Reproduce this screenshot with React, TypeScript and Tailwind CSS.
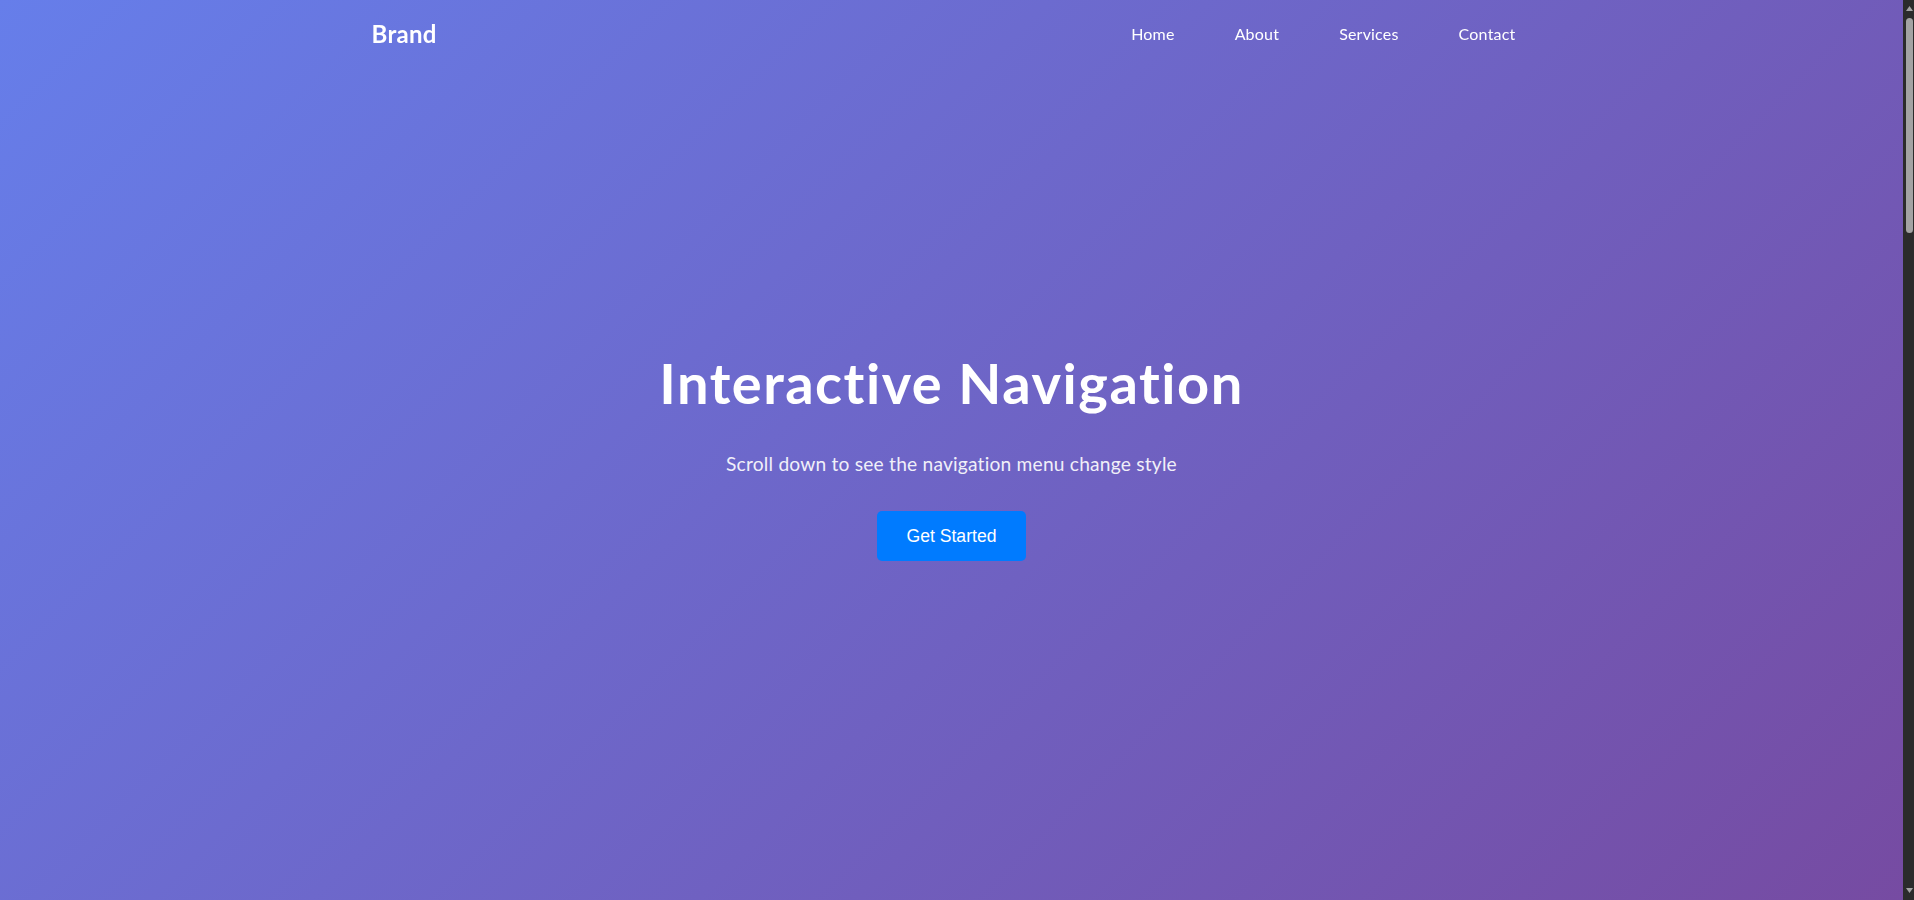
import React from 'react';

const LINKS = ['Home', 'About', 'Services', 'Contact'];

// Secções abaixo do hero (fora do ecrã inicial)
const SECTIONS = [
  { id: 'about', title: 'About', text: 'Learn more about who we are and what we do.' },
  { id: 'services', title: 'Services', text: 'Discover the services we offer to our clients.' },
  { id: 'contact', title: 'Contact', text: 'Get in touch with us for any questions.' },
];

// Barra de rolagem escura como na captura
const ScrollTrack: React.FC = () => (
  <aside className="w-[11px] shrink-0 h-screen bg-[#2b2b2b] flex flex-col items-end pr-[1px]">
    <svg width="7" height="5" viewBox="0 0 7 5" className="mt-[6px]">
      <polygon points="3.5,0 7,5 0,5" fill="#a3a3a3" />
    </svg>
    <div className="mt-[7px] w-[7px] h-[215px] rounded-full bg-[#a3a3a3]" />
    <div className="flex-1" />
    <svg width="7" height="5" viewBox="0 0 7 5" className="mb-[7px]">
      <polygon points="0,0 7,0 3.5,5" fill="#a3a3a3" />
    </svg>
  </aside>
);

const App: React.FC = () => {
  return (
    <div className="flex h-screen font-['Lato','Open_Sans',sans-serif] text-white">
      <main className="flex-1 min-w-0 overflow-y-auto">
        {/* Navegação fixa */}
        <nav className="fixed top-0 left-0 right-[11px] z-10">
          <div className="max-w-[1200px] mx-auto px-5 h-[68px] flex items-center justify-between">
            <a href="#" className="text-[24px] font-bold leading-[1.2] tracking-[0.3px] text-white">
              Brand
            </a>
            <ul className="flex items-center gap-[28px]">
              {LINKS.map((link) => (
                <li key={link}>
                  <a href={`#${link.toLowerCase()}`} className="block px-4 py-2 text-[16px] tracking-[0.2px] text-white">
                    {link}
                  </a>
                </li>
              ))}
            </ul>
          </div>
        </nav>

        {/* Hero */}
        <section
          id="home"
          className="h-screen pt-[10px] flex flex-col items-center justify-center text-center bg-[linear-gradient(135deg,#667eea_0%,#764ba2_100%)]"
        >
          <h1 className="text-[56px] font-bold leading-[1.2] tracking-[1.5px] mb-[34px]">Interactive Navigation</h1>
          <p className="text-[19.2px] leading-[1.5] tracking-[0.2px] opacity-90 mb-[32px]">
            Scroll down to see the navigation menu change style
          </p>
          <button className="bg-[#007bff] text-white font-['Liberation_Sans',Arial,sans-serif] text-[17.6px] leading-[1.15] px-[30px] py-[15px] rounded-[5px]">
            Get Started
          </button>
        </section>

        {/* Restantes secções */}
        {SECTIONS.map((s, i) => (
          <section
            key={s.id}
            id={s.id}
            className={`h-screen flex flex-col items-center justify-center text-center text-gray-800 ${
              i % 2 === 0 ? 'bg-gray-100' : 'bg-white'
            }`}
          >
            <h2 className="text-[40px] font-bold mb-4">{s.title}</h2>
            <p className="text-[18px] text-gray-600">{s.text}</p>
          </section>
        ))}
      </main>
      <ScrollTrack />
    </div>
  );
};

export default App;
